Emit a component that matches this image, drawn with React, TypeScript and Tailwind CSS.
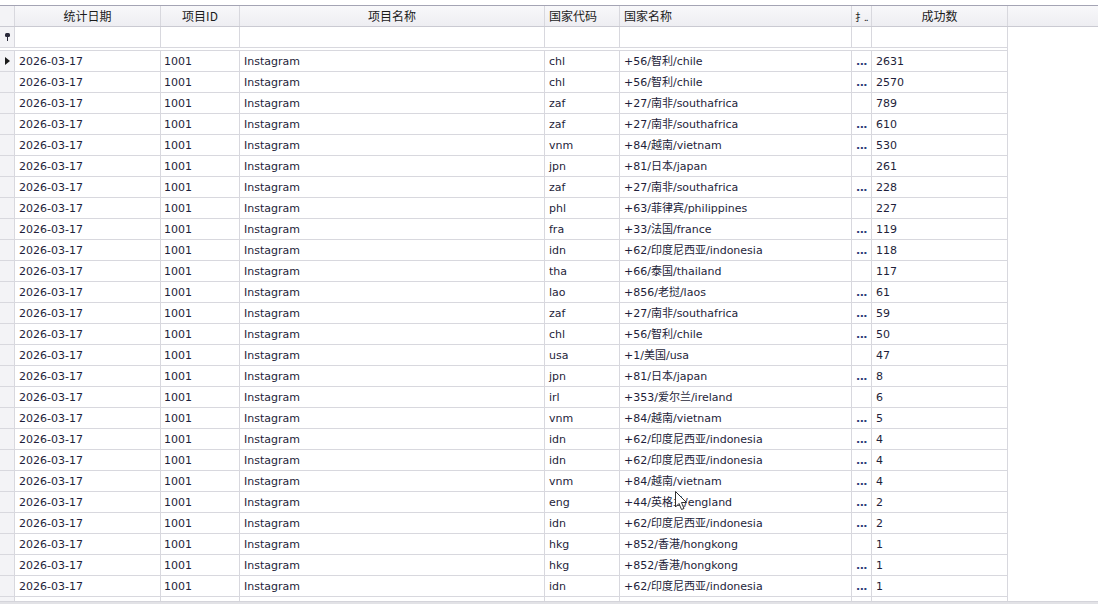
import React from 'react';

type Row = {
  date: string;
  pid: string;
  name: string;
  code: string;
  country: string;
  more: boolean;
  count: number;
};

const rows: Row[] = [
  ['chl', '+56/智利/chile', 1, 2631],
  ['chl', '+56/智利/chile', 1, 2570],
  ['zaf', '+27/南非/southafrica', 0, 789],
  ['zaf', '+27/南非/southafrica', 1, 610],
  ['vnm', '+84/越南/vietnam', 1, 530],
  ['jpn', '+81/日本/japan', 0, 261],
  ['zaf', '+27/南非/southafrica', 1, 228],
  ['phl', '+63/菲律宾/philippines', 0, 227],
  ['fra', '+33/法国/france', 1, 119],
  ['idn', '+62/印度尼西亚/indonesia', 1, 118],
  ['tha', '+66/泰国/thailand', 0, 117],
  ['lao', '+856/老挝/laos', 1, 61],
  ['zaf', '+27/南非/southafrica', 1, 59],
  ['chl', '+56/智利/chile', 1, 50],
  ['usa', '+1/美国/usa', 0, 47],
  ['jpn', '+81/日本/japan', 1, 8],
  ['irl', '+353/爱尔兰/ireland', 0, 6],
  ['vnm', '+84/越南/vietnam', 1, 5],
  ['idn', '+62/印度尼西亚/indonesia', 1, 4],
  ['idn', '+62/印度尼西亚/indonesia', 1, 4],
  ['vnm', '+84/越南/vietnam', 1, 4],
  ['eng', '+44/英格兰/england', 1, 2],
  ['idn', '+62/印度尼西亚/indonesia', 1, 2],
  ['hkg', '+852/香港/hongkong', 0, 1],
  ['hkg', '+852/香港/hongkong', 1, 1],
  ['idn', '+62/印度尼西亚/indonesia', 1, 1],
].map(([code, country, more, count]) => ({
  date: '2026-03-17',
  pid: '1001',
  name: 'Instagram',
  code: code as string,
  country: country as string,
  more: more === 1,
  count: count as number,
}));

const font = { fontFamily: '"DejaVu Sans", "Noto Sans CJK SC", sans-serif' };
const cjk = { fontFamily: '"Noto Sans CJK SC", "DejaVu Sans", sans-serif' };

function Cell({ w, children, className = '' }: { w: string; children?: React.ReactNode; className?: string }) {
  return (
    <div className={`${w} shrink-0 h-full border-r border-[#d8d8de] flex items-center overflow-hidden whitespace-nowrap ${className}`}>
      {children}
    </div>
  );
}

function Indicator({ children }: { children?: React.ReactNode }) {
  return (
    <div className="w-[15px] shrink-0 h-full border-r border-[#d8d8de] bg-[#f3f3f6] flex items-center justify-center">
      {children}
    </div>
  );
}

function EmptyCells() {
  return (
    <>
      <Cell w="w-[146px]" />
      <Cell w="w-[79px]" />
      <Cell w="w-[305px]" />
      <Cell w="w-[75px]" />
      <Cell w="w-[232px]" />
      <Cell w="w-[20px]" />
      <Cell w="w-[136px]" />
    </>
  );
}

export default function App() {
  return (
    <div className="relative w-[1098px] h-[604px] overflow-hidden bg-white flex flex-col pt-[5px] text-[11px] text-[#1e1e3a]" style={font}>
      {/* header */}
      <div className="h-[22px] shrink-0 flex border-t border-b border-t-[#a4a4b4] border-b-[#cacad2] bg-gradient-to-b from-[#f8f8fa] to-[#eeeef2] text-[12px] text-[#1c1c1c]" style={cjk}>
        <Indicator />
        <Cell w="w-[146px]" className="justify-center">统计日期</Cell>
        <Cell w="w-[79px]" className="justify-center">项目ID</Cell>
        <Cell w="w-[305px]" className="justify-center">项目名称</Cell>
        <Cell w="w-[75px]" className="pl-[4px]">国家代码</Cell>
        <Cell w="w-[232px]" className="pl-[4px]">国家名称</Cell>
        <Cell w="w-[20px]" className="pl-[3px] text-[10px] tracking-[-1px]">扌..</Cell>
        <Cell w="w-[136px]" className="justify-center">成功数</Cell>
        <div className="flex-1" />
      </div>

      {/* filter row */}
      <div className="h-[21px] shrink-0 flex">
        <div className="w-[1008px] flex border-b border-[#d8d8de]">
          <Indicator>
            <svg width="7" height="9" viewBox="0 0 7 9">
              <rect x="1" y="0" width="5" height="4" rx="1.5" fill="#2a2a3a" />
              <rect x="3" y="3" width="1" height="5" fill="#2a2a3a" />
            </svg>
          </Indicator>
          <EmptyCells />
        </div>
      </div>
      <div className="h-[3px] shrink-0 w-[1008px] border-b border-[#d8d8de] border-r" />

      {/* data rows */}
      <div className="flex-1 overflow-hidden">
        {rows.map((r, i) => (
          <div key={i} className="h-[21px] w-[1008px] flex border-b border-[#d8d8de]">
            <Indicator>
              {i === 0 && (
                <svg width="5" height="8" viewBox="0 0 5 8">
                  <polygon points="0,0 5,4 0,8" fill="#1a1a1a" />
                </svg>
              )}
            </Indicator>
            <Cell w="w-[146px]" className="pl-[4px] pt-[2px]">{r.date}</Cell>
            <Cell w="w-[79px]" className="pl-[3px] pt-[2px]">{r.pid}</Cell>
            <Cell w="w-[305px]" className="pl-[4px] pt-[2px]">{r.name}</Cell>
            <Cell w="w-[75px]" className="pl-[4px] pt-[2px]">{r.code}</Cell>
            <Cell w="w-[232px]" className="pl-[4px] pt-[2px]">{r.country}</Cell>
            <Cell w="w-[20px]" className="justify-center pt-[2px]">
              {r.more && <span className="font-bold text-[#2c3c78] tracking-[-0.5px]">...</span>}
            </Cell>
            <Cell w="w-[136px]" className="pl-[4px] pt-[2px]">{r.count}</Cell>
          </div>
        ))}
        <div className="h-[21px] w-[1008px] flex">
          <Indicator />
          <EmptyCells />
        </div>
      </div>

      {/* bottom scroll edge */}
      <div className="h-[3px] shrink-0 bg-[#e2e2e6] border-t border-[#d4d4da]" />

      {/* mouse cursor */}
      <svg className="absolute left-[675px] top-[491px]" width="13" height="20" viewBox="0 0 13 20">
        <path d="M0.5 0.5 L0.5 16 L4 12.5 L6.5 18.5 L9 17.5 L6.5 11.5 L11.5 11.5 Z" fill="white" stroke="#303030" strokeWidth="1" strokeLinejoin="round" />
      </svg>
    </div>
  );
}
